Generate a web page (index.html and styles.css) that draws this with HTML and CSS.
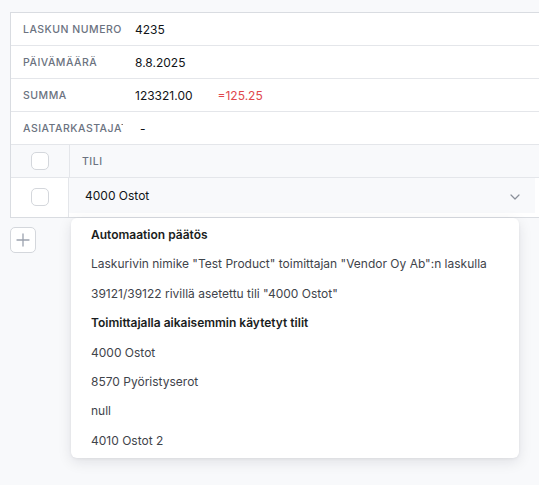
FILE: index.html
```html
<!DOCTYPE html>
<html lang="fi">
<head>
<meta charset="utf-8">
<title>Lasku</title>
<link rel="stylesheet" href="styles.css">
</head>
<body>
<div class="page">
  <div class="card">
    <div class="field">
      <div class="label">LASKUN NUMERO</div>
      <div class="value">4235</div>
    </div>
    <div class="field">
      <div class="label">PÄIVÄMÄÄRÄ</div>
      <div class="value">8.8.2025</div>
    </div>
    <div class="field">
      <div class="label">SUMMA</div>
      <div class="value">123321.00<span class="diff">=125.25</span></div>
    </div>
    <div class="field">
      <div class="label">ASIATARKASTAJAT</div>
      <div class="value"><span class="dash">-</span></div>
    </div>
    <div class="trow thead">
      <div class="checkcell"><span class="checkbox"></span></div>
      <div class="colhead">TILI</div>
    </div>
    <div class="trow tbody">
      <div class="checkcell"><span class="checkbox"></span></div>
      <div class="selectcell">
        <div class="select">
          <span>4000 Ostot</span>
          <svg class="chev" width="10" height="6" viewBox="0 0 10 6"><path d="M1 1l4 4 4-4" fill="none" stroke="#8a9099" stroke-width="1.2" stroke-linecap="round" stroke-linejoin="round"/></svg>
        </div>
      </div>
    </div>
  </div>
  <button class="addbtn" type="button">
    <svg width="14" height="14" viewBox="0 0 14 14"><path d="M7 1v12M1 7h12" stroke="#9ca3af" stroke-width="1.3" stroke-linecap="round"/></svg>
  </button>
  <div class="dropdown">
    <div class="item bold">Automaation päätös</div>
    <div class="item">Laskurivin nimike "Test Product" toimittajan "Vendor Oy Ab":n laskulla</div>
    <div class="item">39121/39122 rivillä asetettu tili "4000 Ostot"</div>
    <div class="item bold">Toimittajalla aikaisemmin käytetyt tilit</div>
    <div class="item">4000 Ostot</div>
    <div class="item">8570 Pyöristyserot</div>
    <div class="item">null</div>
    <div class="item">4010 Ostot 2</div>
  </div>
</div>
</body>
</html>
```

FILE: styles.css
```css
html, body {
  margin: 0;
  padding: 0;
  background: #f8f9fb;
  overflow: hidden;
}
body {
  font-family: Inter, "Liberation Sans", sans-serif;
  color: #1f2328;
  width: 539px;
  height: 485px;
}
.page {
  position: relative;
  padding: 12px 0 0 10px;
}
.card {
  width: 560px;
  background: #fff;
  border: 1px solid #d9dce1;
}
.field {
  display: flex;
  align-items: center;
  height: 32px;
  border-bottom: 1px solid #e4e6ea;
}
.label {
  width: 100px;
  padding-left: 12px;
  overflow: hidden;
  white-space: nowrap;
  font-size: 10.5px;
  font-weight: 500;
  letter-spacing: 0.5px;
  color: #6b7280;
  flex: none;
}
.value {
  padding-left: 12px;
  font-size: 12px;
  color: #111418;
}
.diff {
  color: #e0474c;
  margin-left: 25px;
}
.dash {
  margin-left: 5px;
}
.trow {
  display: flex;
}
.thead {
  height: 32px;
  background: #f8f9fb;
  border-bottom: 1px solid #e4e6ea;
}
.tbody {
  height: 39px;
}
.checkcell {
  width: 58px;
  flex: none;
  border-right: 1px solid #e4e6ea;
  display: flex;
  align-items: center;
  justify-content: center;
}
.tbody .checkcell {
  align-items: flex-start;
  padding-top: 10px;
  box-sizing: border-box;
}
.checkbox {
  width: 16px;
  height: 16px;
  border: 1px solid #d4d7dc;
  border-radius: 5px;
  background: #fff;
}
.colhead {
  display: flex;
  align-items: center;
  padding-left: 12px;
  font-size: 10.5px;
  font-weight: 500;
  letter-spacing: 0.5px;
  color: #6b7280;
}
.selectcell {
  flex: 1;
  padding-bottom: 4px;
}
.select {
  width: 466px;
  height: 35px;
  background: #f8f9fb;
  display: flex;
  align-items: center;
  justify-content: space-between;
  padding: 0 16px;
  box-sizing: border-box;
  font-size: 12px;
  color: #111418;
}
.chev {
  margin-right: -1px;
  margin-top: 2px;
}
.addbtn {
  margin-top: 9px;
  width: 26px;
  height: 26px;
  padding: 0;
  border: 1px solid #d4d7dc;
  border-radius: 5px;
  background: #fff;
  display: flex;
  align-items: center;
  justify-content: center;
}
.dropdown {
  position: absolute;
  left: 71px;
  top: 218px;
  width: 448px;
  box-sizing: border-box;
  padding: 2px 20px 3px;
  background: #fff;
  border-radius: 6px;
  box-shadow: 0 4px 14px rgba(17, 24, 39, 0.10), 0 1px 3px rgba(17, 24, 39, 0.06);
}
.item {
  line-height: 29.4px;
  font-size: 12px;
  color: #3f444b;
  white-space: nowrap;
}
.item.bold {
  font-weight: 600;
  color: #1a1d21;
}
```
